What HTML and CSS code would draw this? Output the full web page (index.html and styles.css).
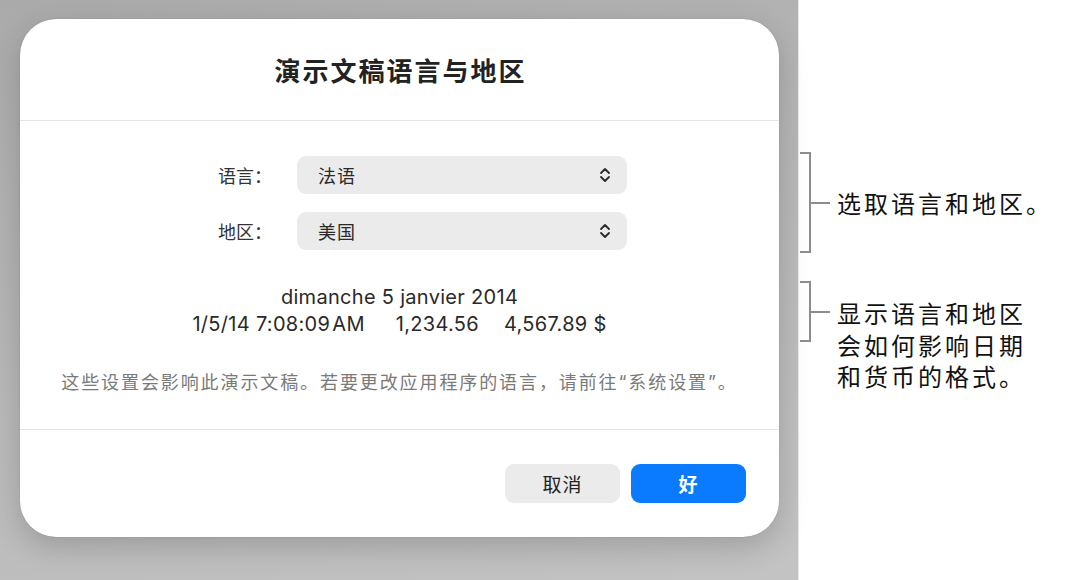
FILE: index.html
```html
<!DOCTYPE html>
<html lang="zh-CN">
<head>
  <meta charset="UTF-8">
  <meta name="viewport" content="width=device-width, initial-scale=1.0">
  <title>演示文稿语言与地区</title>
  <link rel="stylesheet" href="styles.css">
</head>
<body>
  <div class="stage">
    <div class="dialog">
      <div class="dialog-head">
        <h1>演示文稿语言与地区</h1>
      </div>

      <div class="dialog-body">
        <div class="form">
          <label>语言：</label>
          <div class="popup">
            <span>法语</span>
            <svg width="12" height="18" viewBox="0 0 12 18"><path d="M2 7 L6 3 L10 7 M2 11 L6 15 L10 11" fill="none" stroke="#2a2a2a" stroke-width="1.8" stroke-linecap="round" stroke-linejoin="round"/></svg>
          </div>
          <label>地区：</label>
          <div class="popup">
            <span>美国</span>
            <svg width="12" height="18" viewBox="0 0 12 18"><path d="M2 7 L6 3 L10 7 M2 11 L6 15 L10 11" fill="none" stroke="#2a2a2a" stroke-width="1.8" stroke-linecap="round" stroke-linejoin="round"/></svg>
          </div>
        </div>

        <div class="preview">
          <div>dimanche 5 janvier 2014</div>
          <div class="preview-row">
            <span>1/5/14 7:08:09&#8202;AM</span>
            <span class="num">1,234.56</span>
            <span class="money">4,567.89 $</span>
          </div>
        </div>

        <p class="hint">这些设置会影响此演示文稿。若要更改应用程序的语言，请前往“系统设置”。</p>
      </div>

      <div class="dialog-foot">
        <button class="btn">取消</button>
        <button class="btn btn-primary">好</button>
      </div>
    </div>
  </div>

  <div class="callouts">
    <div class="callout callout-one">
      <div class="brace brace-tall"></div>
      <div class="tick"></div>
      <div class="callout-text">选取语言和地区。</div>
    </div>
    <div class="callout callout-two">
      <div class="brace-wrap">
        <div class="brace brace-short"></div>
        <div class="tick"></div>
      </div>
      <div class="callout-text">显示语言和地区<br>会如何影响日期<br>和货币的格式。</div>
    </div>
  </div>
</body>
</html>
```

FILE: styles.css
```css
:root {
  --blue: #0a7aff;
  --field: #ebebeb;
  --line: #e4e4e4;
  --text: #262626;
  --muted: #7a7a7a;
}

body {
  margin: 0;
  height: 580px;
  display: flex;
  overflow: hidden;
  font-family: Inter, "Noto Sans CJK SC", sans-serif;
  color: var(--text);
  background: #fff;
}

.stage {
  width: 798px;
  flex: none;
  padding: 19px 0 0 20px;
  box-sizing: border-box;
  background: linear-gradient(165deg, #aaaaaa 0%, #bbbbbb 60%, #c3c3c3 100%);
}

.dialog {
  width: 759px;
  height: 518px;
  background: #fff;
  border-radius: 36px;
  box-shadow: 0 10px 30px rgba(0, 0, 0, 0.18), 0 0 1px rgba(0, 0, 0, 0.3);
  display: flex;
  flex-direction: column;
}

.dialog-head {
  height: 101px;
  display: flex;
  align-items: center;
  justify-content: center;
  border-bottom: 1px solid var(--line);
}

h1 {
  margin: 0;
  padding-left: 2px;
  font-family: "Noto Sans CJK SC", sans-serif;
  font-size: 26px;
  font-weight: 700;
  letter-spacing: 2px;
  color: #222;
}

.dialog-body {
  height: 309px;
  border-bottom: 1px solid var(--line);
  padding-top: 35px;
  box-sizing: border-box;
}

.form {
  display: grid;
  grid-template-columns: 252px 330px;
  column-gap: 25px;
  row-gap: 18px;
  align-items: center;
}

label {
  text-align: right;
  font-family: "Noto Sans CJK SC", sans-serif;
  font-size: 18px;
  letter-spacing: 0;
  color: #333;
}

.popup {
  height: 38px;
  border-radius: 9px;
  background: var(--field);
  display: flex;
  align-items: center;
  justify-content: space-between;
  padding: 0 16px 0 21px;
  font-family: "Noto Sans CJK SC", sans-serif;
  font-size: 18px;
  letter-spacing: 1px;
  color: #2a2a2a;
}

.preview {
  margin-top: 34px;
  text-align: center;
  font-size: 20px;
  letter-spacing: 0.3px;
  line-height: 27px;
  color: #2a2a2a;
}

.preview-row {
  display: flex;
  justify-content: center;
}

.preview-row .num {
  margin-left: 31px;
}

.preview-row .money {
  margin-left: 25px;
}

.hint {
  margin: 33px 0 0;
  text-align: center;
  font-family: Inter, "Noto Sans CJK SC", sans-serif;
  font-size: 18px;
  letter-spacing: 1.9px;
  line-height: 24px;
  color: var(--muted);
}

.dialog-foot {
  flex: 1;
  display: flex;
  justify-content: flex-end;
  align-items: flex-start;
  gap: 11px;
  padding: 34px 33px 0 0;
}

.btn {
  width: 115px;
  height: 39px;
  border: none;
  border-radius: 9px;
  background: var(--field);
  font-family: "Noto Sans CJK SC", sans-serif;
  font-size: 19px;
  letter-spacing: 1px;
  color: #222;
  cursor: pointer;
}

.btn-primary {
  background: var(--blue);
  color: #fff;
  font-weight: 700;
}

.callouts {
  flex: 1;
  padding-top: 152px;
  border-left: 1px solid #e6e6e6;
}

.callout {
  display: flex;
  padding-left: 1px;
}

.callout-one {
  align-items: center;
}

.callout-two {
  margin-top: 28px;
  align-items: flex-start;
}

.brace-wrap {
  display: flex;
  align-items: center;
}

.brace {
  width: 11px;
  border: 2px solid #8c8c8c;
  border-left: none;
  box-sizing: border-box;
}

.brace-tall {
  height: 101px;
}

.brace-short {
  height: 61px;
}

.tick {
  width: 20px;
  height: 2px;
  background: #8c8c8c;
  margin-left: -1px;
}

.callout-text {
  margin-left: 7px;
  font-family: "Noto Sans CJK SC", sans-serif;
  font-size: 24px;
  letter-spacing: 3px;
  line-height: 31.5px;
  color: #111;
}

.callout-two .callout-text {
  margin-top: 16px;
}
```
